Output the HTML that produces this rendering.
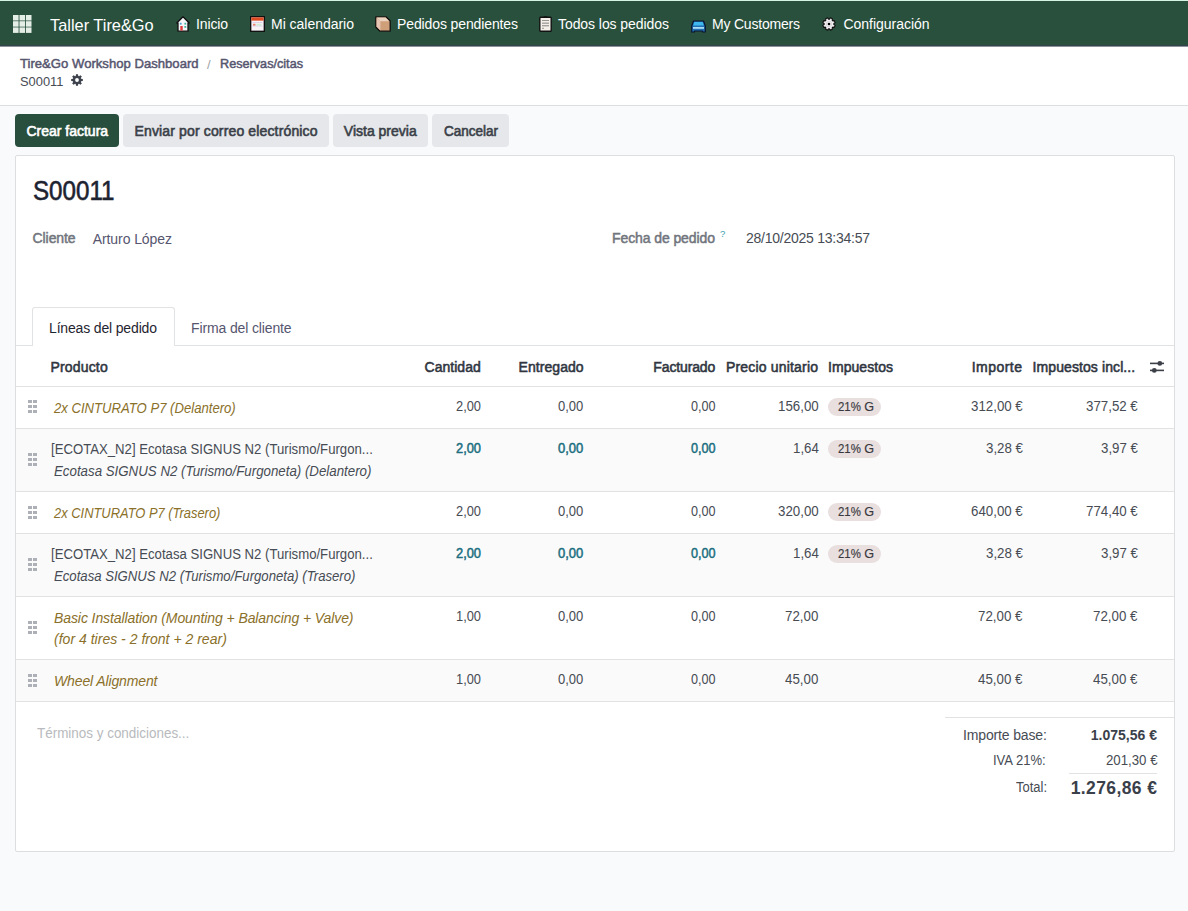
<!DOCTYPE html>
<html><head><meta charset="utf-8">
<style>
*{box-sizing:border-box;margin:0;padding:0}
html,body{width:1188px;height:911px;overflow:hidden}
body{background:#f9fafb;font-family:"Liberation Sans",sans-serif;font-size:13px;color:#374151;position:relative}
.a{position:absolute}
.t{position:absolute;white-space:nowrap}
</style></head>
<body>
<div class="a" style="left:0px;top:0px;width:1188px;height:1px;background:#d6f3e6;"></div>
<div class="a" style="left:0px;top:1px;width:1188px;height:44px;background:#29503d;"></div>
<div class="a" style="left:0px;top:45px;width:1188px;height:1px;background:#34444f;"></div>
<div class="a" style="left:0px;top:46px;width:1188px;height:1px;background:#8a939a;"></div>
<div class="a" style="left:0px;top:47px;width:1188px;height:58px;background:#fff;"></div>
<div class="a" style="left:0px;top:105px;width:1188px;height:1px;background:#dcdee1;"></div>
<div class="a" style="left:15px;top:114px;width:104px;height:33px;background:#284f3d;border-radius:4px"></div>
<div class="a" style="left:123px;top:114px;width:206px;height:33px;background:#e5e7ea;border-radius:4px"></div>
<div class="a" style="left:333px;top:114px;width:95px;height:33px;background:#e5e7ea;border-radius:4px"></div>
<div class="a" style="left:432px;top:114px;width:77px;height:33px;background:#e5e7ea;border-radius:4px"></div>
<div class="a" style="left:15px;top:155px;width:1160px;height:697px;background:#fff;border:1px solid #dcdee0;border-radius:2px"></div>
<div class="a" style="left:16px;top:345px;width:1158px;height:1px;background:#e1e2e4;"></div>
<div class="a" style="left:32px;top:307px;width:143px;height:39px;background:#fff;border:1px solid #e1e2e4;border-bottom:none;border-radius:3px 3px 0 0"></div>
<div class="a" style="left:16px;top:386px;width:1158px;height:1px;background:#e1e2e4;"></div>
<div class="a" style="left:16px;top:429px;width:1158px;height:62px;background:#fafafa;"></div>
<div class="a" style="left:16px;top:534px;width:1158px;height:62px;background:#fafafa;"></div>
<div class="a" style="left:16px;top:660px;width:1158px;height:41px;background:#fafafa;"></div>
<div class="a" style="left:16px;top:428px;width:1158px;height:1px;background:#e1e2e4;"></div>
<div class="a" style="left:16px;top:491px;width:1158px;height:1px;background:#e1e2e4;"></div>
<div class="a" style="left:16px;top:533px;width:1158px;height:1px;background:#e1e2e4;"></div>
<div class="a" style="left:16px;top:596px;width:1158px;height:1px;background:#e1e2e4;"></div>
<div class="a" style="left:16px;top:659px;width:1158px;height:1px;background:#e1e2e4;"></div>
<div class="a" style="left:16px;top:701px;width:1158px;height:1px;background:#e1e2e4;"></div>
<div class="a" style="left:945px;top:717px;width:229px;height:1px;background:#e1e2e4;"></div>
<div class="a" style="left:1069px;top:773px;width:88px;height:1px;background:#e1e2e4;"></div>
<div class="a" style="left:28px;top:400px;width:4px;height:3px;background:#adb1b7;"></div>
<div class="a" style="left:28px;top:405px;width:4px;height:3px;background:#adb1b7;"></div>
<div class="a" style="left:28px;top:410px;width:4px;height:3px;background:#adb1b7;"></div>
<div class="a" style="left:33px;top:400px;width:4px;height:3px;background:#adb1b7;"></div>
<div class="a" style="left:33px;top:405px;width:4px;height:3px;background:#adb1b7;"></div>
<div class="a" style="left:33px;top:410px;width:4px;height:3px;background:#adb1b7;"></div>
<div class="a" style="left:28px;top:453px;width:4px;height:3px;background:#adb1b7;"></div>
<div class="a" style="left:28px;top:458px;width:4px;height:3px;background:#adb1b7;"></div>
<div class="a" style="left:28px;top:463px;width:4px;height:3px;background:#adb1b7;"></div>
<div class="a" style="left:33px;top:453px;width:4px;height:3px;background:#adb1b7;"></div>
<div class="a" style="left:33px;top:458px;width:4px;height:3px;background:#adb1b7;"></div>
<div class="a" style="left:33px;top:463px;width:4px;height:3px;background:#adb1b7;"></div>
<div class="a" style="left:28px;top:506px;width:4px;height:3px;background:#adb1b7;"></div>
<div class="a" style="left:28px;top:511px;width:4px;height:3px;background:#adb1b7;"></div>
<div class="a" style="left:28px;top:516px;width:4px;height:3px;background:#adb1b7;"></div>
<div class="a" style="left:33px;top:506px;width:4px;height:3px;background:#adb1b7;"></div>
<div class="a" style="left:33px;top:511px;width:4px;height:3px;background:#adb1b7;"></div>
<div class="a" style="left:33px;top:516px;width:4px;height:3px;background:#adb1b7;"></div>
<div class="a" style="left:28px;top:558px;width:4px;height:3px;background:#adb1b7;"></div>
<div class="a" style="left:28px;top:563px;width:4px;height:3px;background:#adb1b7;"></div>
<div class="a" style="left:28px;top:568px;width:4px;height:3px;background:#adb1b7;"></div>
<div class="a" style="left:33px;top:558px;width:4px;height:3px;background:#adb1b7;"></div>
<div class="a" style="left:33px;top:563px;width:4px;height:3px;background:#adb1b7;"></div>
<div class="a" style="left:33px;top:568px;width:4px;height:3px;background:#adb1b7;"></div>
<div class="a" style="left:28px;top:621px;width:4px;height:3px;background:#adb1b7;"></div>
<div class="a" style="left:28px;top:626px;width:4px;height:3px;background:#adb1b7;"></div>
<div class="a" style="left:28px;top:631px;width:4px;height:3px;background:#adb1b7;"></div>
<div class="a" style="left:33px;top:621px;width:4px;height:3px;background:#adb1b7;"></div>
<div class="a" style="left:33px;top:626px;width:4px;height:3px;background:#adb1b7;"></div>
<div class="a" style="left:33px;top:631px;width:4px;height:3px;background:#adb1b7;"></div>
<div class="a" style="left:28px;top:674px;width:4px;height:3px;background:#adb1b7;"></div>
<div class="a" style="left:28px;top:679px;width:4px;height:3px;background:#adb1b7;"></div>
<div class="a" style="left:28px;top:684px;width:4px;height:3px;background:#adb1b7;"></div>
<div class="a" style="left:33px;top:674px;width:4px;height:3px;background:#adb1b7;"></div>
<div class="a" style="left:33px;top:679px;width:4px;height:3px;background:#adb1b7;"></div>
<div class="a" style="left:33px;top:684px;width:4px;height:3px;background:#adb1b7;"></div>
<div class="a" style="left:828px;top:398px;width:53px;height:18px;background:#e9dfdf;border-radius:9px"></div>
<div class="a" style="left:828px;top:439.5px;width:53px;height:18px;background:#e9dfdf;border-radius:9px"></div>
<div class="a" style="left:828px;top:503px;width:53px;height:18px;background:#e9dfdf;border-radius:9px"></div>
<div class="a" style="left:828px;top:544.5px;width:53px;height:18px;background:#e9dfdf;border-radius:9px"></div>
<svg class="a" style="left:13px;top:15px" width="19" height="18" viewBox="0 0 19 18"><g fill="#e4eee6"><rect x="0" y="0" width="5.6" height="5.5"/><rect x="6.45" y="0" width="5.6" height="5.5"/><rect x="12.9" y="0" width="5.6" height="5.5"/><rect x="0" y="6.2" width="5.6" height="5.5"/><rect x="6.45" y="6.2" width="5.6" height="5.5"/><rect x="12.9" y="6.2" width="5.6" height="5.5"/><rect x="0" y="12.4" width="5.6" height="5.5"/><rect x="6.45" y="12.4" width="5.6" height="5.5"/><rect x="12.9" y="12.4" width="5.6" height="5.5"/></g></svg>
<!-- nav icons -->
<svg class="a" style="left:176px;top:16px" width="14" height="16" viewBox="0 0 14 16">
<path d="M7 0.8 L13.2 7 L12 7 L12 15.2 L2 15.2 L2 7 L0.8 7 Z" fill="#f4f6f8" stroke="#111" stroke-width="1.3" stroke-linejoin="round"/>
<rect x="4.3" y="10" width="2.4" height="4.6" fill="#e03a3a"/>
<rect x="3.8" y="6.8" width="1.8" height="1.8" fill="#4aa3c8"/>
<rect x="8.4" y="6.8" width="1.8" height="1.8" fill="#3cb5a0"/>
<rect x="8.4" y="10" width="1.8" height="1.8" fill="#3cb5a0"/>
</svg>
<svg class="a" style="left:250px;top:16px" width="15" height="16" viewBox="0 0 15 16">
<rect x="0.7" y="0.7" width="13.6" height="14.6" fill="#f6f2f6" stroke="#0c0c0c" stroke-width="1.3"/>
<rect x="1.35" y="1.35" width="12.3" height="3.3" fill="#de4a22"/>
<g fill="#dcd2ea"><rect x="2.5" y="6" width="10" height="1"/><rect x="2.5" y="9.5" width="10" height="1"/></g>
<rect x="3" y="7.8" width="2.5" height="1.8" fill="#e88070"/>
<rect x="6.5" y="7.8" width="5" height="1.8" fill="#cfeccf"/>
</svg>
<svg class="a" style="left:375px;top:16px" width="16" height="16" viewBox="0 0 16 16">
<path d="M0.8 0.8 L11 0.8 L15.2 5 L15.2 15.2 L5 15.2 L0.8 11 Z" fill="#cf9f7a" stroke="#111" stroke-width="1.3" stroke-linejoin="round"/>
<path d="M1.6 1.6 L10.6 1.6 L14.2 5.2 L5.4 5.2 Z" fill="#ead3c0"/>
<path d="M1.6 1.6 L5.4 5.2 L5.4 14.4 L1.6 10.6 Z" fill="#e6c5b5"/>
</svg>
<svg class="a" style="left:539px;top:16px" width="13" height="16" viewBox="0 0 13 16">
<rect x="0.8" y="1.3" width="11.4" height="13.9" rx="0.8" fill="#f3eee8" stroke="#111" stroke-width="1.4"/>
<path d="M4.5 1 L6.5 0.3 L8.5 1" stroke="#111" stroke-width="1" fill="none"/>
<g fill="#8d8a88"><rect x="3" y="4" width="7" height="0.9"/><rect x="3" y="6.6" width="7" height="1.1"/><rect x="3" y="9.2" width="7" height="1.1"/><rect x="3" y="11.8" width="2" height="0.9"/></g>
</svg>
<svg class="a" style="left:691px;top:19.5px" width="15" height="13" viewBox="0 0 15 13">
<path d="M2.5 1 L12.5 1 L14.3 6 L14.3 12 L11.5 12 L11.5 11 L3.5 11 L3.5 12 L0.7 12 L0.7 6 Z" fill="#1f6fb2" stroke="#0a1430" stroke-width="1.2" stroke-linejoin="round"/>
<path d="M3.3 2 L11.7 2 L12.8 5.5 L2.2 5.5 Z" fill="#3fb8ee"/>
<rect x="2" y="7" width="11" height="1.8" fill="#a8dcf5"/>
</svg>
<svg class="a" style="left:822px;top:17px" width="14" height="14" viewBox="0 0 14 14">
<g transform="translate(7 7)">
<path d="M4.88 0.47 L6.15 1.36 L5.31 3.38 L3.78 3.12 L3.12 3.78 L3.38 5.31 L1.36 6.15 L0.47 4.88 L-0.47 4.88 L-1.36 6.15 L-3.38 5.31 L-3.12 3.78 L-3.78 3.12 L-5.31 3.38 L-6.15 1.36 L-4.88 0.47 L-4.88 -0.47 L-6.15 -1.36 L-5.31 -3.38 L-3.78 -3.12 L-3.12 -3.78 L-3.38 -5.31 L-1.36 -6.15 L-0.47 -4.88 L0.47 -4.88 L1.36 -6.15 L3.38 -5.31 L3.12 -3.78 L3.78 -3.12 L5.31 -3.38 L6.15 -1.36 L4.88 -0.47 Z" fill="#f2f0f2" stroke="#0d0d0d" stroke-width="1.1" stroke-linejoin="round"/>
<circle r="2.8" fill="none" stroke="#c9c5c9" stroke-width="0.6"/>
<circle r="1.3" fill="#000"/>
</g></svg>
<!-- breadcrumb gear -->
<svg class="a" style="left:71px;top:74px" width="12" height="12" viewBox="0 0 12 12">
<g transform="translate(6 6)">
<path d="M4.11 -1.26 L5.81 -1.02 L5.81 1.02 L4.11 1.26 L3.80 2.02 L4.83 3.38 L3.38 4.83 L2.02 3.80 L1.26 4.11 L1.02 5.81 L-1.02 5.81 L-1.26 4.11 L-2.02 3.80 L-3.38 4.83 L-4.83 3.38 L-3.80 2.02 L-4.11 1.26 L-5.81 1.02 L-5.81 -1.02 L-4.11 -1.26 L-3.80 -2.02 L-4.83 -3.38 L-3.38 -4.83 L-2.02 -3.80 L-1.26 -4.11 L-1.02 -5.81 L1.02 -5.81 L1.26 -4.11 L2.02 -3.80 L3.38 -4.83 L4.83 -3.38 L3.80 -2.02 Z" fill="#3d424c"/>
<circle r="1.9" fill="#fff"/>
</g></svg>
<!-- settings sliders icon -->
<svg class="a" style="left:1149px;top:359px" width="16" height="15" viewBox="0 0 16 15">
<g stroke="#3b3f47" stroke-width="1.6"><line x1="1" y1="4.4" x2="15" y2="4.4"/><line x1="1" y1="11.4" x2="15" y2="11.4"/></g>
<circle cx="10.8" cy="4.4" r="2.4" fill="#3b3f47"/><circle cx="5.3" cy="11.4" r="2.4" fill="#3b3f47"/>
</svg>

<div class="t" style="left:50.00px;top:16.61px;font-size:17px;line-height:17px;color:#ffffff;transform:scaleX(0.9629);transform-origin:0 0">Taller Tire&amp;Go</div>
<div class="t" style="left:196.00px;top:17.45px;font-size:14px;line-height:14px;color:#ffffff;letter-spacing:-0.137px">Inicio</div>
<div class="t" style="left:271.00px;top:17.45px;font-size:14px;line-height:14px;color:#ffffff;letter-spacing:-0.022px">Mi calendario</div>
<div class="t" style="left:397.00px;top:17.45px;font-size:14px;line-height:14px;color:#ffffff;letter-spacing:-0.117px">Pedidos pendientes</div>
<div class="t" style="left:558.00px;top:17.45px;font-size:14px;line-height:14px;color:#ffffff;letter-spacing:-0.067px">Todos los pedidos</div>
<div class="t" style="left:712.00px;top:17.45px;font-size:14px;line-height:14px;color:#ffffff;letter-spacing:-0.203px">My Customers</div>
<div class="t" style="left:843.40px;top:17.45px;font-size:14px;line-height:14px;color:#ffffff;letter-spacing:-0.015px">Configuración</div>
<div class="t" style="left:19.60px;top:57.30px;font-size:13.7px;line-height:13.7px;color:#56566f;-webkit-text-stroke:0.5px #56566f;transform:scaleX(0.9582);transform-origin:0 0">Tire&amp;Go Workshop Dashboard</div>
<div class="t" style="left:207.00px;top:57.90px;font-size:13px;line-height:13px;color:#a0a3a8">/</div>
<div class="t" style="left:220.00px;top:57.30px;font-size:13.7px;line-height:13.7px;color:#56566f;-webkit-text-stroke:0.5px #56566f;transform:scaleX(0.9247);transform-origin:0 0">Reservas/citas</div>
<div class="t" style="left:19.60px;top:74.50px;font-size:13.7px;line-height:13.7px;color:#474c54;transform:scaleX(0.9399);transform-origin:0 0">S00011</div>
<div class="t" style="left:26.40px;top:124.15px;font-size:14px;line-height:14px;color:#ffffff;-webkit-text-stroke:0.6px #ffffff">Crear factura</div>
<div class="t" style="left:134.50px;top:124.15px;font-size:14px;line-height:14px;color:#3a3f48;-webkit-text-stroke:0.6px #3a3f48;letter-spacing:0.144px">Enviar por correo electrónico</div>
<div class="t" style="left:343.80px;top:124.15px;font-size:14px;line-height:14px;color:#3a3f48;-webkit-text-stroke:0.6px #3a3f48">Vista previa</div>
<div class="t" style="left:443.60px;top:124.15px;font-size:14px;line-height:14px;color:#3a3f48;-webkit-text-stroke:0.6px #3a3f48;transform:scaleX(0.9638);transform-origin:0 0">Cancelar</div>
<div class="t" style="left:33.00px;top:176.57px;font-size:27.8px;line-height:27.8px;color:#1d2330;-webkit-text-stroke:0.6px #1d2330;transform:scaleX(0.8691);transform-origin:0 0">S00011</div>
<div class="t" style="left:32.60px;top:231.35px;font-size:14px;line-height:14px;color:#71757d;-webkit-text-stroke:0.5px #71757d;letter-spacing:-0.097px">Cliente</div>
<div class="t" style="left:92.70px;top:232.25px;font-size:14px;line-height:14px;color:#56566f;letter-spacing:-0.078px">Arturo López</div>
<div class="t" style="left:612.00px;top:230.85px;font-size:14px;line-height:14px;color:#71757d;-webkit-text-stroke:0.5px #71757d;letter-spacing:-0.093px">Fecha de pedido</div>
<div class="t" style="left:720.00px;top:228.66px;font-size:9.5px;line-height:9.5px;color:#3d9fb0">?</div>
<div class="t" style="left:746.00px;top:230.75px;font-size:14px;line-height:14px;color:#474c54;letter-spacing:-0.247px">28/10/2025 13:34:57</div>
<div class="t" style="left:49.00px;top:321.25px;font-size:14px;line-height:14px;color:#1f2530;letter-spacing:-0.159px">Líneas del pedido</div>
<div class="t" style="left:191.00px;top:321.25px;font-size:14px;line-height:14px;color:#56566f;letter-spacing:-0.131px">Firma del cliente</div>
<div class="t" style="left:50.40px;top:359.65px;font-size:14px;line-height:14px;color:#30363f;-webkit-text-stroke:0.55px #30363f;letter-spacing:0.181px">Producto</div>
<div class="t" style="left:424.50px;top:359.65px;font-size:14px;line-height:14px;color:#30363f;-webkit-text-stroke:0.55px #30363f;letter-spacing:0.037px">Cantidad</div>
<div class="t" style="left:518.60px;top:359.65px;font-size:14px;line-height:14px;color:#30363f;-webkit-text-stroke:0.55px #30363f;letter-spacing:0.049px">Entregado</div>
<div class="t" style="left:653.30px;top:359.65px;font-size:14px;line-height:14px;color:#30363f;-webkit-text-stroke:0.55px #30363f;letter-spacing:-0.129px">Facturado</div>
<div class="t" style="left:726.00px;top:359.65px;font-size:14px;line-height:14px;color:#30363f;-webkit-text-stroke:0.55px #30363f;letter-spacing:0.179px">Precio unitario</div>
<div class="t" style="left:828.00px;top:359.65px;font-size:14px;line-height:14px;color:#30363f;-webkit-text-stroke:0.55px #30363f;letter-spacing:0.052px">Impuestos</div>
<div class="t" style="left:971.70px;top:359.65px;font-size:14px;line-height:14px;color:#30363f;-webkit-text-stroke:0.55px #30363f;letter-spacing:0.473px">Importe</div>
<div class="t" style="left:1032.50px;top:359.65px;font-size:14px;line-height:14px;color:#30363f;-webkit-text-stroke:0.55px #30363f;letter-spacing:0.097px">Impuestos incl...</div>
<div class="t" style="left:54.00px;top:401.05px;font-size:14px;line-height:14px;color:#8a7029;font-style:italic;transform:scaleX(0.9367);transform-origin:0 0">2x CINTURATO P7 (Delantero)</div>
<div class="t" style="left:455.80px;top:399.35px;font-size:14px;line-height:14px;color:#474c54;transform:scaleX(0.9175);transform-origin:0 0">2,00</div>
<div class="t" style="left:558.40px;top:399.35px;font-size:14px;line-height:14px;color:#474c54;transform:scaleX(0.9285);transform-origin:0 0">0,00</div>
<div class="t" style="left:690.70px;top:399.35px;font-size:14px;line-height:14px;color:#474c54;transform:scaleX(0.9028);transform-origin:0 0">0,00</div>
<div class="t" style="left:777.82px;top:399.35px;font-size:14px;line-height:14px;color:#474c54;transform:scaleX(0.9500);transform-origin:0 0">156,00</div>
<div class="t" style="left:837.80px;top:400.53px;font-size:12.6px;line-height:12.6px;color:#38383d;-webkit-text-stroke:0.15px #38383d;transform:scaleX(0.9085);transform-origin:0 0">21%</div>
<div class="t" style="left:864.20px;top:400.53px;font-size:12.6px;line-height:12.6px;color:#38383d;-webkit-text-stroke:0.15px #38383d">G</div>
<div class="t" style="left:971.03px;top:399.35px;font-size:14px;line-height:14px;color:#474c54;transform:scaleX(0.9500);transform-origin:0 0">312,00 €</div>
<div class="t" style="left:1085.93px;top:399.35px;font-size:14px;line-height:14px;color:#474c54;transform:scaleX(0.9500);transform-origin:0 0">377,52 €</div>
<div class="t" style="left:50.80px;top:441.85px;font-size:14px;line-height:14px;color:#474c54;transform:scaleX(0.9400);transform-origin:0 0">[ECOTAX_N2] Ecotasa SIGNUS N2 (Turismo/Furgon...</div>
<div class="t" style="left:54.30px;top:463.85px;font-size:14px;line-height:14px;color:#474c54;font-style:italic;transform:scaleX(0.9495);transform-origin:0 0">Ecotasa SIGNUS N2 (Turismo/Furgoneta) (Delantero)</div>
<div class="t" style="left:455.80px;top:441.35px;font-size:14px;line-height:14px;color:#1b6f80;-webkit-text-stroke:0.5px #1b6f80;transform:scaleX(0.9175);transform-origin:0 0">2,00</div>
<div class="t" style="left:558.40px;top:441.35px;font-size:14px;line-height:14px;color:#1b6f80;-webkit-text-stroke:0.5px #1b6f80;transform:scaleX(0.9285);transform-origin:0 0">0,00</div>
<div class="t" style="left:690.70px;top:441.35px;font-size:14px;line-height:14px;color:#1b6f80;-webkit-text-stroke:0.5px #1b6f80;transform:scaleX(0.9028);transform-origin:0 0">0,00</div>
<div class="t" style="left:792.61px;top:441.35px;font-size:14px;line-height:14px;color:#474c54;transform:scaleX(0.9500);transform-origin:0 0">1,64</div>
<div class="t" style="left:837.80px;top:442.53px;font-size:12.6px;line-height:12.6px;color:#38383d;-webkit-text-stroke:0.15px #38383d;transform:scaleX(0.9085);transform-origin:0 0">21%</div>
<div class="t" style="left:864.20px;top:442.53px;font-size:12.6px;line-height:12.6px;color:#38383d;-webkit-text-stroke:0.15px #38383d">G</div>
<div class="t" style="left:985.82px;top:441.35px;font-size:14px;line-height:14px;color:#474c54;transform:scaleX(0.9500);transform-origin:0 0">3,28 €</div>
<div class="t" style="left:1100.72px;top:441.35px;font-size:14px;line-height:14px;color:#474c54;transform:scaleX(0.9500);transform-origin:0 0">3,97 €</div>
<div class="t" style="left:54.00px;top:506.05px;font-size:14px;line-height:14px;color:#8a7029;font-style:italic;transform:scaleX(0.9220);transform-origin:0 0">2x CINTURATO P7 (Trasero)</div>
<div class="t" style="left:455.80px;top:504.35px;font-size:14px;line-height:14px;color:#474c54;transform:scaleX(0.9175);transform-origin:0 0">2,00</div>
<div class="t" style="left:558.40px;top:504.35px;font-size:14px;line-height:14px;color:#474c54;transform:scaleX(0.9285);transform-origin:0 0">0,00</div>
<div class="t" style="left:690.70px;top:504.35px;font-size:14px;line-height:14px;color:#474c54;transform:scaleX(0.9028);transform-origin:0 0">0,00</div>
<div class="t" style="left:777.82px;top:504.35px;font-size:14px;line-height:14px;color:#474c54;transform:scaleX(0.9500);transform-origin:0 0">320,00</div>
<div class="t" style="left:837.80px;top:505.53px;font-size:12.6px;line-height:12.6px;color:#38383d;-webkit-text-stroke:0.15px #38383d;transform:scaleX(0.9085);transform-origin:0 0">21%</div>
<div class="t" style="left:864.20px;top:505.53px;font-size:12.6px;line-height:12.6px;color:#38383d;-webkit-text-stroke:0.15px #38383d">G</div>
<div class="t" style="left:971.03px;top:504.35px;font-size:14px;line-height:14px;color:#474c54;transform:scaleX(0.9500);transform-origin:0 0">640,00 €</div>
<div class="t" style="left:1085.93px;top:504.35px;font-size:14px;line-height:14px;color:#474c54;transform:scaleX(0.9500);transform-origin:0 0">774,40 €</div>
<div class="t" style="left:50.80px;top:546.85px;font-size:14px;line-height:14px;color:#474c54;transform:scaleX(0.9400);transform-origin:0 0">[ECOTAX_N2] Ecotasa SIGNUS N2 (Turismo/Furgon...</div>
<div class="t" style="left:54.30px;top:568.85px;font-size:14px;line-height:14px;color:#474c54;font-style:italic;transform:scaleX(0.9396);transform-origin:0 0">Ecotasa SIGNUS N2 (Turismo/Furgoneta) (Trasero)</div>
<div class="t" style="left:455.80px;top:546.35px;font-size:14px;line-height:14px;color:#1b6f80;-webkit-text-stroke:0.5px #1b6f80;transform:scaleX(0.9175);transform-origin:0 0">2,00</div>
<div class="t" style="left:558.40px;top:546.35px;font-size:14px;line-height:14px;color:#1b6f80;-webkit-text-stroke:0.5px #1b6f80;transform:scaleX(0.9285);transform-origin:0 0">0,00</div>
<div class="t" style="left:690.70px;top:546.35px;font-size:14px;line-height:14px;color:#1b6f80;-webkit-text-stroke:0.5px #1b6f80;transform:scaleX(0.9028);transform-origin:0 0">0,00</div>
<div class="t" style="left:792.61px;top:546.35px;font-size:14px;line-height:14px;color:#474c54;transform:scaleX(0.9500);transform-origin:0 0">1,64</div>
<div class="t" style="left:837.80px;top:547.53px;font-size:12.6px;line-height:12.6px;color:#38383d;-webkit-text-stroke:0.15px #38383d;transform:scaleX(0.9085);transform-origin:0 0">21%</div>
<div class="t" style="left:864.20px;top:547.53px;font-size:12.6px;line-height:12.6px;color:#38383d;-webkit-text-stroke:0.15px #38383d">G</div>
<div class="t" style="left:985.82px;top:546.35px;font-size:14px;line-height:14px;color:#474c54;transform:scaleX(0.9500);transform-origin:0 0">3,28 €</div>
<div class="t" style="left:1100.72px;top:546.35px;font-size:14px;line-height:14px;color:#474c54;transform:scaleX(0.9500);transform-origin:0 0">3,97 €</div>
<div class="t" style="left:54.00px;top:610.95px;font-size:14px;line-height:14px;color:#8a7029;font-style:italic;letter-spacing:-0.089px">Basic Installation (Mounting + Balancing + Valve)</div>
<div class="t" style="left:54.00px;top:631.95px;font-size:14px;line-height:14px;color:#8a7029;font-style:italic;letter-spacing:0.015px">(for 4 tires - 2 front + 2 rear)</div>
<div class="t" style="left:455.80px;top:609.35px;font-size:14px;line-height:14px;color:#474c54;transform:scaleX(0.9175);transform-origin:0 0">1,00</div>
<div class="t" style="left:558.40px;top:609.35px;font-size:14px;line-height:14px;color:#474c54;transform:scaleX(0.9285);transform-origin:0 0">0,00</div>
<div class="t" style="left:690.70px;top:609.35px;font-size:14px;line-height:14px;color:#474c54;transform:scaleX(0.9028);transform-origin:0 0">0,00</div>
<div class="t" style="left:785.22px;top:609.35px;font-size:14px;line-height:14px;color:#474c54;transform:scaleX(0.9500);transform-origin:0 0">72,00</div>
<div class="t" style="left:978.43px;top:609.35px;font-size:14px;line-height:14px;color:#474c54;transform:scaleX(0.9500);transform-origin:0 0">72,00 €</div>
<div class="t" style="left:1093.33px;top:609.35px;font-size:14px;line-height:14px;color:#474c54;transform:scaleX(0.9500);transform-origin:0 0">72,00 €</div>
<div class="t" style="left:54.00px;top:674.05px;font-size:14px;line-height:14px;color:#8a7029;font-style:italic;letter-spacing:-0.131px">Wheel Alignment</div>
<div class="t" style="left:455.80px;top:672.35px;font-size:14px;line-height:14px;color:#474c54;transform:scaleX(0.9175);transform-origin:0 0">1,00</div>
<div class="t" style="left:558.40px;top:672.35px;font-size:14px;line-height:14px;color:#474c54;transform:scaleX(0.9285);transform-origin:0 0">0,00</div>
<div class="t" style="left:690.70px;top:672.35px;font-size:14px;line-height:14px;color:#474c54;transform:scaleX(0.9028);transform-origin:0 0">0,00</div>
<div class="t" style="left:785.22px;top:672.35px;font-size:14px;line-height:14px;color:#474c54;transform:scaleX(0.9500);transform-origin:0 0">45,00</div>
<div class="t" style="left:978.43px;top:672.35px;font-size:14px;line-height:14px;color:#474c54;transform:scaleX(0.9500);transform-origin:0 0">45,00 €</div>
<div class="t" style="left:1093.33px;top:672.35px;font-size:14px;line-height:14px;color:#474c54;transform:scaleX(0.9500);transform-origin:0 0">45,00 €</div>
<div class="t" style="left:36.60px;top:725.65px;font-size:14px;line-height:14px;color:#b8babd;transform:scaleX(0.9595);transform-origin:0 0">Términos y condiciones...</div>
<div class="t" style="left:963.00px;top:727.85px;font-size:14px;line-height:14px;color:#474c54;letter-spacing:-0.150px">Importe base:</div>
<div class="t" style="left:1090.70px;top:728.15px;font-size:14px;line-height:14px;color:#3a404a;font-weight:bold;letter-spacing:0.014px">1.075,56 €</div>
<div class="t" style="left:993.40px;top:752.75px;font-size:14px;line-height:14px;color:#474c54;transform:scaleX(0.9315);transform-origin:0 0">IVA 21%:</div>
<div class="t" style="left:1105.50px;top:752.75px;font-size:14px;line-height:14px;color:#474c54;transform:scaleX(0.9450);transform-origin:0 0">201,30 €</div>
<div class="t" style="left:1015.80px;top:779.65px;font-size:14px;line-height:14px;color:#474c54;transform:scaleX(0.9264);transform-origin:0 0">Total:</div>
<div class="t" style="left:1070.70px;top:780.09px;font-size:17.5px;line-height:17.5px;color:#3a404a;font-weight:bold;letter-spacing:0.398px">1.276,86 €</div>
</body></html>
